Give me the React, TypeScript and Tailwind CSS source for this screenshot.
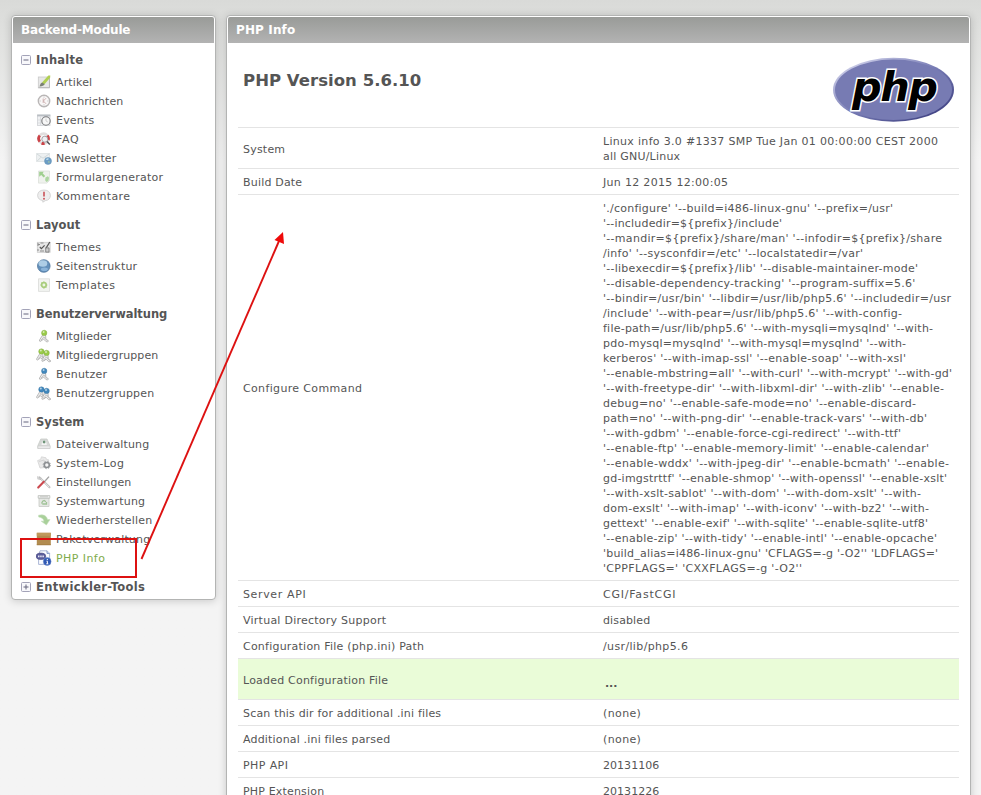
import React, { useLayoutEffect, useRef, useState } from "react";

type IconName =
  | "article" | "clock" | "events" | "faq" | "newsletter" | "form" | "comment"
  | "themes" | "globe" | "template" | "member" | "members" | "user" | "users"
  | "files" | "log" | "settings" | "maintenance" | "restore" | "package" | "php";

function Person({ x, y, color, dark }: { x: number; y: number; color: string; dark: string }) {
  return (
    <g transform={`translate(${x} ${y})`}>
      <path d="M4.4 5.5 1.2 10.6q-.6 1.6.8 1.5l3.2-2.3 2.6 2.6q1.6.5 2.3-.7L7.4 9.5 7.2 5.5z" fill="#f0f0f0" stroke="#a9a9a9" strokeWidth=".8" />
      <path d="M4.300 7.600 7.600 8.800M2.500 10.800 5 8.400M6.200 8.800l2.600 2.600" stroke="#bdbdbd" strokeWidth=".9" />
      <circle cx="5.800" cy="3.600" r="2.700" fill={color} stroke={dark} strokeWidth=".4" />
      <circle cx="5.200" cy="2.700" r="1" fill="#fff" opacity=".6" />
    </g>
  );
}

function Drawing({ name }: { name: IconName }) {
  switch (name) {
    case "article":
      return (
        <>
          <rect x="2.300" y="3" width="11" height="10.800" fill="#e8e8e8" stroke="#c9c9c9" strokeWidth=".8" />
          <path d="M2.500 13.700h11V4" fill="none" stroke="#b0b0b0" strokeWidth=".8" />
          <path d="M3.500 12.600q.6-3.600 2.800-4.400L9 9.800q-1.400 2.600-5.500 2.800z" fill="#7a8074" />
          <path d="M6 8.400 12.400 1.400l1.900.2-.2 2.200L8.700 10.100z" fill="#b0cf52" />
        </>
      );
    case "clock":
      return (
        <>
          <circle cx="8" cy="8" r="5.700" fill="#f9f7f7" stroke="#b9b6b6" strokeWidth="1.400" />
          <path d="M8 3.600v1M8 11.400v1M3.600 8h1M11.400 8h1" stroke="#bbb" />
          <path d="M10 5.200 7.400 8l2.600 2.800M7.200 5.500V10" stroke="#c9a9a9" fill="none" strokeWidth=".9" />
        </>
      );
    case "events":
      return (
        <>
          <rect x="1.500" y="3" width="12.500" height="10.500" fill="#f0f1f3" stroke="#cfd2d5" strokeWidth=".8" />
          <path d="M1.200 3.500H14.300" stroke="#b9bec3" strokeWidth="1.800" />
          <path d="M4.500 5v8M1.500 8H14M1.500 11H14" stroke="#d3d5d8" strokeWidth=".7" />
          <circle cx="10" cy="9" r="4.200" fill="#f7f7f7" stroke="#77787a" strokeWidth="1.100" />
          <path d="M10 6.500V9l1.800 1" stroke="#c5c5c5" fill="none" strokeWidth=".8" />
        </>
      );
    case "faq":
      return (
        <>
          <circle cx="7.600" cy="7.600" r="4.900" fill="#fafafa" stroke="#e2dede" strokeWidth="2.800" />
          <path d="M3.800 4.500a5 5 0 0 0 0 6.200M11.400 4.500a5 5 0 0 1 .8 4.500M5.600 12.100a5 5 0 0 0 3 .3" fill="none" stroke="#cc4247" strokeWidth="2.800" />
          <circle cx="8.800" cy="8.200" r="3" fill="#f0f0f4" stroke="#a5a3a5" />
          <path d="m11 10.500 2.800 3" stroke="#4b4d52" strokeWidth="1.400" />
        </>
      );
    case "newsletter":
      return (
        <>
          <rect x=".6" y="3.500" width="13" height="8" fill="#edf0f1" stroke="#dde1e3" strokeWidth=".8" />
          <path d="m1 4 6 4.200L13 4M1 11.200l4-4M13 11.200l-4-4" stroke="#ccd3d6" fill="none" strokeWidth=".8" />
          <circle cx="12" cy="11" r="3.500" fill="#6c9dc5" stroke="#6590b4" strokeWidth=".5" />
          <path d="M9.800 9.600q1.300-1.800 3-1.100-.2 1.700-1.800 1.600z" fill="#bddbed" />
          <path d="m12 11 2 .5-.8 1.800-1.200-.7z" fill="#a4c9a1" opacity=".7" />
        </>
      );
    case "form":
      return (
        <>
          <path d="M2.500 2h11v9.500l-2.600 2.600H2.500z" fill="#eff2ed" stroke="#dce0da" strokeWidth=".8" />
          <path d="M3.200 2.800h4.600L6.600 4.300l2.600 2.600-1.500 1.500-2.500-2.500-2 1.900z" fill="#9fcf8f" />
          <path d="m9.500 8.500 2.400-1.200 1.200 1.500-.7 3.200-2 1-1.300-1.800z" fill="#aed6a2" />
        </>
      );
    case "comment":
      return (
        <>
          <path d="M8 2q6 .2 6.400 5.500-.3 4.600-5 5.100l-2.600 1.600v-1.700Q2 12 1.600 7.400 2 2.200 8 2z" fill="#eee" stroke="#cbcbcb" strokeWidth=".8" />
          <path d="M8 3.800v4.800" stroke="#cc5a60" strokeWidth="1.700" />
          <circle cx="8" cy="10.700" r="1" fill="#cc5a60" />
        </>
      );
    case "themes":
      return (
        <>
          <rect x="1.300" y="3.300" width="12.800" height="10" fill="#e6e6e6" stroke="#cacaca" strokeWidth=".8" />
          <path d="M2 4v3M4.500 4h3M2 10v2M4 12h4M2 5.500h2" stroke="#8d8d8d" />
          <path d="m3.800 8 1.600 1.600 3.200-3.300" stroke="#555" strokeWidth="1.200" fill="none" />
          <path d="m9.800 9.500 4-6.500" stroke="#555" strokeWidth="1.300" />
          <path d="M9.700 8.900h3.300v4.200H9.700z" fill="#ccc" stroke="#777" strokeWidth=".8" />
        </>
      );
    case "globe":
      return (
        <>
          <circle cx="7.800" cy="8" r="6.300" fill="#6390bb" stroke="#52779d" strokeWidth=".8" />
          <ellipse cx="6.900" cy="5.500" rx="4.400" ry="3.300" fill="#c5e1f4" opacity=".75" />
          <ellipse cx="8.400" cy="11.300" rx="3.500" ry="1.800" fill="#a5ccec" opacity=".6" />
        </>
      );
    case "template":
      return (
        <>
          <path d="M2.500 1.800h11v12.600h-11z" fill="#f3f4f2" stroke="#d9dad8" strokeWidth=".8" />
          <circle cx="7.900" cy="8" r="2.300" fill="#edf5e5" stroke="#a9cd7e" strokeWidth="1.700" />
          <path d="M7.900 4.400v1M7.900 10.600v1M4.400 8h1M10.400 8h1M5.600 5.400l.6.8M9.700 9.800l.6.8" stroke="#a9cd7e" />
        </>
      );
    case "member":
      return <Person x={2.4} y={1.3} color="#9acb48" dark="#78a53a" />;
    case "members":
      return (
        <>
          <Person x={-0.4} y={0.9} color="#9acb48" dark="#78a53a" />
          <Person x={4.8} y={2.3} color="#9acb48" dark="#78a53a" />
        </>
      );
    case "user":
      return <Person x={2.4} y={1.3} color="#4188bd" dark="#316d9a" />;
    case "users":
      return (
        <>
          <Person x={-0.4} y={0.9} color="#4188bd" dark="#316d9a" />
          <Person x={4.8} y={2.3} color="#4188bd" dark="#316d9a" />
        </>
      );
    case "files":
      return (
        <>
          <path d="M4.800 3h6.200l3 6.800v2.700H1.800V9.800z" fill="#d6d8d6" stroke="#c8cbc8" strokeWidth=".8" />
          <path d="M2 10h12v2.500H2z" fill="#ebebeb" stroke="#c9c9c9" strokeWidth=".5" />
          <path d="M5.500 9q.4-4.800 2.500-5 2.400.2 2.800 5z" fill="#f4f4f4" />
          <circle cx="8.100" cy="6" r="1.400" fill="#6e9478" />
        </>
      );
    case "log":
      return (
        <>
          <path d="m1.600 5.600 3-1.200L5.500 1.800l4.500 1 .4 1.600 2.200.4v7.500L4 13z" fill="#e9e9e9" stroke="#d3d3d3" strokeWidth=".8" />
          <path d="m3 6.500 5-1.500 1 6" stroke="#d4d4d4" fill="none" />
          <circle cx="10.800" cy="10" r="2.500" fill="#f5f5f5" stroke="#8c8f92" strokeWidth="1.600" />
          <circle cx="10.800" cy="10" r="3.700" fill="none" stroke="#8c8f92" strokeWidth=".8" strokeDasharray="1.400 1.500" />
        </>
      );
    case "settings":
      return (
        <>
          <path d="m3.500 3.400 10 9.900" stroke="#bdbdbd" strokeWidth="2" strokeLinecap="round" />
          <path d="m4.200 4 9 9.200" stroke="#efefef" strokeWidth=".8" />
          <path d="M1.800 2.200l.2 2.500 2.500.6.9-1.400" stroke="#c0c0c0" strokeWidth="1.100" fill="none" />
          <path d="M8.200 8 13 2.600" stroke="#a0a0a0" strokeWidth="1.300" />
          <path d="m2.200 13.600 5.600-5.800" stroke="#cc4a50" strokeWidth="2.100" strokeLinecap="round" />
        </>
      );
    case "maintenance":
      return (
        <>
          <path d="M3 5h10v8.500H3z" fill="#e6e8e5" stroke="#c6c9c4" strokeWidth=".8" />
          <path d="M2.200 2.600h11.600v2.600H2.200z" fill="#f1f1f1" stroke="#b9bcb8" strokeWidth=".8" />
          <path d="M4 3.800h8" stroke="#c3c5c1" />
          <path d="m5.500 10.500 1.200-2.200 1.500-.8 1.700 1.300M10.500 9v2H6.300" stroke="#9fc296" strokeWidth="1.300" fill="none" />
        </>
      );
    case "restore":
      return <path d="M2.600 3.200q7.600-1.600 9 4.400h2.400l-3.600 5.400-5.200-3.800h2.800q-.6-3.400-5.400-4.200z" fill="#a9d09a" stroke="#c4dfbc" strokeWidth=".6" />;
    case "package":
      return (
        <>
          <rect x=".8" y="1.800" width="14" height="12.300" fill="#b28c50" />
          <rect x=".8" y="1.800" width="14" height="3" fill="#c09a5d" />
          <path d="M.8 13.700h14" stroke="#a17c42" strokeWidth=".8" />
        </>
      );
    case "php":
      return (
        <>
          <path d="M4 .8h7l2.600 2.600v11H2.600V6z" fill="#fbfcff" stroke="#95a5cc" strokeWidth=".8" />
          <path d="M11 .8v2.600h2.600" fill="#dce4f4" stroke="#6f87bd" strokeWidth=".8" />
          <ellipse cx="4.900" cy="6.300" rx="4.800" ry="3.200" fill="#5c5e9c" stroke="#41427c" strokeWidth=".6" />
          <path d="M2 6.400h6" stroke="#e9e9f6" strokeWidth="1.600" strokeDasharray="1.500 .7" />
          <circle cx="11.200" cy="11.500" r="3.900" fill="#3059b4" stroke="#6d8acb" strokeWidth=".5" />
          <path d="M11.300 8.900v1.200M10.500 11.200h.9v2.600M10.300 13.800h2" stroke="#fff" strokeWidth="1" fill="none" />
        </>
      );
  }
}

function Icon({ name }: { name: IconName }) {
  return (
    <svg viewBox="0 0 16 16" className="h-4 w-4 shrink-0">
      <Drawing name={name} />
    </svg>
  );
}

function Toggle({ open }: { open: boolean }) {
  return (
    <svg viewBox="0 0 10 10" className="h-2.5 w-2.5 shrink-0">
      <rect x=".5" y=".5" width="9" height="9" rx="1" fill="#f8f8fb" stroke="#a3a3b8" />
      <path d={open ? "M2.500 5h5" : "M2.500 5h5M5 2.500v5"} stroke="#65657d" />
    </svg>
  );
}

/** A single line of text whose letter spacing is tuned to fill the given width. */
function Line({ text, width }: { text: string; width: number }) {
  const ref = useRef<HTMLSpanElement>(null);
  const [spacing, setSpacing] = useState(0);
  useLayoutEffect(() => {
    if (ref.current) {
      const natural = ref.current.getBoundingClientRect().width;
      setSpacing((width + 0.3 - natural) / text.length);
    }
  }, []);
  return (
    <span ref={ref} className="inline-block whitespace-pre" style={{ letterSpacing: `${spacing}px` }}>
      {text}
    </span>
  );
}

type Item = [icon: IconName, label: string, width: number];
type Group = { title: string; width: number; open: boolean; items: Item[] };

const groups: Group[] = [
  {
    title: "Inhalte",
    width: 47,
    open: true,
    items: [
      ["article", "Artikel", 36],
      ["clock", "Nachrichten", 67],
      ["events", "Events", 38],
      ["faq", "FAQ", 23],
      ["newsletter", "Newsletter", 60],
      ["form", "Formulargenerator", 107],
      ["comment", "Kommentare", 74],
    ],
  },
  {
    title: "Layout",
    width: 44,
    open: true,
    items: [
      ["themes", "Themes", 45],
      ["globe", "Seitenstruktur", 81],
      ["template", "Templates", 59],
    ],
  },
  {
    title: "Benutzerverwaltung",
    width: 131,
    open: true,
    items: [
      ["member", "Mitglieder", 55],
      ["members", "Mitgliedergruppen", 102],
      ["user", "Benutzer", 51],
      ["users", "Benutzergruppen", 98],
    ],
  },
  {
    title: "System",
    width: 48,
    open: true,
    items: [
      ["files", "Dateiverwaltung", 93],
      ["log", "System-Log", 68],
      ["settings", "Einstellungen", 75],
      ["maintenance", "Systemwartung", 89],
      ["restore", "Wiederherstellen", 96],
      ["package", "Paketverwaltung", 94],
      ["php", "PHP Info", 49],
    ],
  },
  { title: "Entwickler-Tools", width: 109, open: false, items: [] },
];

type TextLine = [text: string, width: number];

const configure: TextLine[] = [
  ["'./configure' '--build=i486-linux-gnu' '--prefix=/usr'", 290],
  ["'--includedir=${prefix}/include'", 179],
  ["'--mandir=${prefix}/share/man' '--infodir=${prefix}/share", 339],
  ["/info' '--sysconfdir=/etc' '--localstatedir=/var'", 260],
  ["'--libexecdir=${prefix}/lib' '--disable-maintainer-mode'", 315],
  ["'--disable-dependency-tracking' '--program-suffix=5.6'", 312],
  ["'--bindir=/usr/bin' '--libdir=/usr/lib/php5.6' '--includedir=/usr", 348],
  ["/include' '--with-pear=/usr/lib/php5.6' '--with-config-", 299],
  ["file-path=/usr/lib/php5.6' '--with-mysqli=mysqlnd' '--with-", 330],
  ["pdo-mysql=mysqlnd' '--with-mysql=mysqlnd' '--with-", 303],
  ["kerberos' '--with-imap-ssl' '--enable-soap' '--with-xsl'", 303],
  ["'--enable-mbstring=all' '--with-curl' '--with-mcrypt' '--with-gd'", 349],
  ["'--with-freetype-dir' '--with-libxml-dir' '--with-zlib' '--enable-", 341],
  ["debug=no' '--enable-safe-mode=no' '--enable-discard-", 313],
  ["path=no' '--with-png-dir' '--enable-track-vars' '--with-db'", 324],
  ["'--with-gdbm' '--enable-force-cgi-redirect' '--with-ttf'", 298],
  ["'--enable-ftp' '--enable-memory-limit' '--enable-calendar'", 326],
  ["'--enable-wddx' '--with-jpeg-dir' '--enable-bcmath' '--enable-", 346],
  ["gd-imgstrttf' '--enable-shmop' '--with-openssl' '--enable-xslt'", 344],
  ["'--with-xslt-sablot' '--with-dom' '--with-dom-xslt' '--with-", 318],
  ["dom-exslt' '--with-imap' '--with-iconv' '--with-bz2' '--with-", 326],
  ["gettext' '--enable-exif' '--with-sqlite' '--enable-sqlite-utf8'", 325],
  ["'--enable-zip' '--with-tidy' '--enable-intl' '--enable-opcache'", 334],
  ["'build_alias=i486-linux-gnu' 'CFLAGS=-g '-O2'' 'LDFLAGS='", 335],
  ["'CPPFLAGS=' 'CXXFLAGS=-g '-O2''", 199],
];

type Row = { label: TextLine; value: TextLine[]; highlight?: boolean };

const rows: Row[] = [
  {
    label: ["System", 42],
    value: [
      ["Linux info 3.0 #1337 SMP Tue Jan 01 00:00:00 CEST 2000", 335],
      ["all GNU/Linux", 77],
    ],
  },
  { label: ["Build Date", 59], value: [["Jun 12 2015 12:00:05", 125]] },
  { label: ["Configure Command", 119], value: configure },
  { label: ["Server API", 63], value: [["CGI/FastCGI", 73]] },
  { label: ["Virtual Directory Support", 143], value: [["disabled", 47]] },
  { label: ["Configuration File (php.ini) Path", 181], value: [["/usr/lib/php5.6", 85]] },
  { label: ["Loaded Configuration File", 145], value: [["...", 12]], highlight: true },
  { label: ["Scan this dir for additional .ini files", 198], value: [["(none)", 38]] },
  { label: ["Additional .ini files parsed", 147], value: [["(none)", 38]] },
  { label: ["PHP API", 45], value: [["20131106", 56]] },
  { label: ["PHP Extension", 81], value: [["20131226", 56]] },
];

function Panel({ title, width, className, children }: { title: string; width: number; className: string; children: React.ReactNode }) {
  return (
    <section className={`rounded-[4px] border border-[#b3b4b3] bg-white p-px shadow-[0_1px_8px_rgba(0,0,0,0.18)] ${className}`}>
      <h2 className="h-[26px] rounded-t-[2px] bg-linear-to-b from-[#999b98] to-[#b3b3b3] pl-2 text-[12px] leading-[26px] font-bold text-white">
        <Line text={title} width={width} />
      </h2>
      {children}
    </section>
  );
}

function PhpLogo() {
  return (
    <svg viewBox="0 0 122 66" className="h-[66px] w-[122px]">
      <defs>
        <linearGradient id="rim" x1="0" y1="0" x2="1" y2="1">
          <stop offset="0.15" stopColor="#c3c5e3" />
          <stop offset="0.5" stopColor="#777bb4" />
          <stop offset="0.9" stopColor="#3f4182" />
        </linearGradient>
      </defs>
      <ellipse cx="60.500" cy="32.800" rx="60.500" ry="32" fill="url(#rim)" />
      <ellipse cx="60.500" cy="32.800" rx="58.500" ry="30.200" fill="#777bb3" />
      <text
        x="19"
        y="43.500"
        fontFamily="DejaVu Sans, sans-serif"
        fontWeight="700"
        fontStyle="italic"
        fontSize="41.500"
        letterSpacing="-1.500"
        fill="#000"
        stroke="#fff"
        strokeWidth="3"
        paintOrder="stroke"
      >
        php
      </text>
    </svg>
  );
}

export default function App() {
  return (
    <div className="relative h-[795px] w-[981px] overflow-hidden bg-linear-to-b from-[#d9dad8] via-[#dedfdd] via-[24px] to-[#f4f4f4] to-[160px] font-['DejaVu_Sans',Verdana,sans-serif] text-[11px] text-[#555]">
      <div className="flex items-start gap-[10px] pt-[15px] pl-[11px]">
        <Panel title="Backend-Module" width={109} className="h-[585px] w-[205px] shrink-0">
          <nav className="pt-[7px] pl-2">
            {groups.map((group) => (
              <div key={group.title} className="mb-[10px]">
                <div className="mb-[3px] flex h-[19px] items-center gap-[5px] text-[11.5px] font-bold">
                  <Toggle open={group.open} />
                  <div className="pt-0.5">
                    <Line text={group.title} width={group.width} />
                  </div>
                </div>
                {group.items.map(([icon, label, width]) => (
                  <div
                    key={label}
                    className={`flex h-[19px] items-center gap-1 pl-[15px] ${icon === "php" ? "text-[#7fab4c]" : ""}`}
                  >
                    <Icon name={icon} />
                    <div className="pt-1">
                      <Line text={label} width={width} />
                    </div>
                  </div>
                ))}
              </div>
            ))}
          </nav>
        </Panel>
        <Panel title="PHP Info" width={59} className="h-[800px] w-[745px] shrink-0">
          <div className="px-[10px]">
            <div className="flex h-[84px] items-start justify-between pr-1 pl-[5px]">
              <h1 className="pt-[26px] text-[16.5px] leading-6 font-bold">
                <Line text="PHP Version 5.6.10" width={178} />
              </h1>
              <div className="pt-[14px]">
                <PhpLogo />
              </div>
            </div>
            {rows.map((row) => (
              <div
                key={row.label[0]}
                className={`flex items-center border-t border-[#e4e4e4] leading-[15px] ${row.highlight ? "h-[41px] bg-[#eafcd8]" : ""}`}
              >
                <div className="w-[360px] shrink-0 pt-0.5 pl-[5px]">
                  <Line text={row.label[0]} width={row.label[1]} />
                </div>
                <div className={row.highlight ? "pt-[9px] pl-[7px] font-bold" : "pt-1.5 pb-1 pl-[5px]"}>
                  {row.value.map(([text, width]) => (
                    <div key={text} className="h-[15px]">
                      <Line text={text} width={width} />
                    </div>
                  ))}
                </div>
              </div>
            ))}
          </div>
        </Panel>
      </div>
      <svg viewBox="0 0 981 795" className="pointer-events-none absolute inset-0 h-full w-full">
        <rect x="21" y="539" width="115" height="38" fill="none" stroke="#dd1111" strokeWidth="2" />
        <path d="M141.500 559 279 241" stroke="#dd1111" strokeWidth="1.900" />
        <path d="M283 232 274.500 240 284 244z" fill="#ee0a0a" />
      </svg>
    </div>
  );
}
